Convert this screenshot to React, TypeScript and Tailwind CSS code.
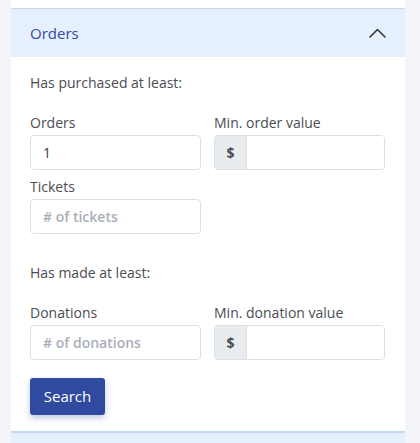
function Label({ children }: { children: string }) {
  return <div className="h-5 text-[14px] leading-5 text-[#4a4d52]">{children}</div>
}

function TextInput({ value, placeholder }: { value?: string; placeholder?: string }) {
  return (
    <input
      defaultValue={value}
      placeholder={placeholder}
      className="mt-[2px] h-[35px] w-full rounded-[4px] border border-[#dcdfe5] bg-white px-3 text-[14px] text-[#3d4046] outline-none placeholder:font-semibold placeholder:text-[#a9afb9]"
    />
  )
}

function MoneyInput() {
  return (
    <div className="mt-[2px] flex h-[35px] w-full overflow-hidden rounded-[4px] border border-[#dcdfe5]">
      <span className="flex w-[32px] items-center justify-center border-r border-[#dcdfe5] bg-[#e9ecef] text-[14px] font-bold text-[#4a4d52]">
        $
      </span>
      <input className="min-w-0 flex-1 bg-white px-3 text-[14px] outline-none" />
    </div>
  )
}

export default function App() {
  return (
    <div className="min-h-[443px] bg-[#f3f5f9] font-['Open_Sans','Noto_Sans',sans-serif]">
      <div className="ml-[11px] w-[394px] bg-white pt-[8px]">
        <div className="flex h-[49px] items-center justify-between border-t border-[#c9d6e8] bg-[#e6f0fd] pl-[19px] pr-[20px]">
          <span className="text-[15px] text-[#3548a6]">Orders</span>
          <svg width="17" height="10" viewBox="0 0 17 10" fill="none" className="mr-[-1px]">
            <path d="M1 9 L8.5 1.5 L16 9" stroke="#33363b" strokeWidth="1.6" strokeLinecap="round" strokeLinejoin="round" />
          </svg>
        </div>

        <div className="pl-[19px] pr-[20px] pt-[16px] pb-[16px]">
          <Label>Has purchased at least:</Label>

          <div className="mt-[20px] grid grid-cols-2 gap-x-[13px]">
            <div>
              <Label>Orders</Label>
              <TextInput value="1" />
            </div>
            <div>
              <Label>Min. order value</Label>
              <MoneyInput />
            </div>
          </div>

          <div className="mt-[7px] grid grid-cols-2 gap-x-[13px]">
            <div>
              <Label>Tickets</Label>
              <TextInput placeholder="# of tickets" />
            </div>
          </div>

          <div className="mt-[29px]">
            <Label>Has made at least:</Label>
          </div>

          <div className="mt-[20px] grid grid-cols-2 gap-x-[13px]">
            <div>
              <Label>Donations</Label>
              <TextInput placeholder="# of donations" />
            </div>
            <div>
              <Label>Min. donation value</Label>
              <MoneyInput />
            </div>
          </div>

          <button
            type="button"
            className="mt-[18px] h-[37px] w-[75px] rounded-[3px] bg-[#2f4a9e] text-[15px] text-white shadow-[0_3px_6px_rgba(47,74,158,0.3)]"
          >
            Search
          </button>
        </div>

        <div className="h-[14px] border-t-2 border-[#c4d8f2] bg-[#e6f0fd]" />
      </div>
    </div>
  )
}
